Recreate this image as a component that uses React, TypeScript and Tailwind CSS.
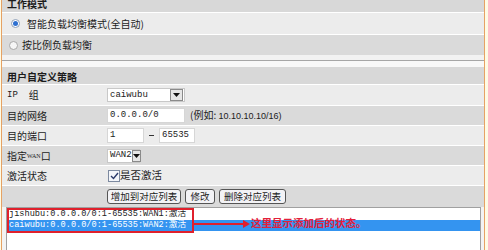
import type { ReactNode } from "react";

const sans = "font-['Noto_Sans_CJK_SC',sans-serif]";
const mono = "font-['Liberation_Mono','Noto_Sans_CJK_SC',monospace]";

function Row({ label, light, h = "h-[19px]", children }: { label?: ReactNode; light?: boolean; h?: string; children?: ReactNode }) {
  return (
    <div className={`flex items-center ${h} ${light ? "bg-[#ececec]" : "bg-[#dadada]"}`}>
      <div className="w-[105px] shrink-0 pl-[5px]">{label}</div>
      <div className="flex items-center">{children}</div>
    </div>
  );
}

function Arrow() {
  return (
    <span className="flex h-[12px] w-[13px] items-center justify-center border border-[#8a8a8a] bg-[#e6e6e6]">
      <svg width="7" height="4" viewBox="0 0 7 4">
        <path d="M0 0h7L3.5 4z" fill="#111" />
      </svg>
    </span>
  );
}

function Select({ value, w }: { value: string; w: string }) {
  return (
    <div className={`flex h-[14px] items-center border border-[#c8c8c8] bg-white pr-px ${w}`}>
      <span className={`${mono} flex-1 pl-[2px] text-[9px] text-[#222]`}>{value}</span>
      <Arrow />
    </div>
  );
}

function Input({ value, w }: { value: string; w: string }) {
  return (
    <div className={`flex h-[15px] items-center border border-[#d6d6d6] bg-white pl-[2px] ${w}`}>
      <span className={`${mono} text-[9px] text-[#222]`}>{value}</span>
    </div>
  );
}

function Button({ label, w }: { label: string; w: string }) {
  return (
    <div className={`flex h-[15px] items-center justify-center rounded-[3px] border border-[#555] bg-[#f3f3f6] text-[9.5px] ${w}`}>
      {label}
    </div>
  );
}

export default function App() {
  return (
    <div className={`${sans} h-[250px] w-[488px] overflow-hidden bg-[#fffbe4] text-[10px] leading-none text-[#1c1c1c]`}>
      <div className="ml-px h-full w-[484px] overflow-hidden border-x border-[#e6a264] bg-[#f3f3f3]">
        {/* ===== 工作模式 ===== */}
        <div className="-mt-[5px] flex flex-col gap-px bg-white">
          <div className="flex h-[17px] items-center bg-[#d8d8d8] pl-[5px] font-bold">工作模式</div>
          <div className="flex h-[21px] items-center gap-[7px] bg-[#ececec] pl-[9px]">
            <span className="flex h-[9px] w-[9px] items-center justify-center rounded-full border border-[#8fa0b8] bg-white">
              <span className="h-[5px] w-[5px] rounded-full bg-[#2d6fd0]" />
            </span>
            <span>智能负载均衡模式(全自动)</span>
          </div>
          <div className="flex h-[20px] items-center gap-[4px] bg-[#dadada] pl-[7px]">
            <span className="h-[9px] w-[9px] rounded-full border border-[#a8a8a8] bg-[#f6f6f6]" />
            <span>按比例负载均衡</span>
          </div>
        </div>

        <div className="h-[5px] bg-[#f2f2f2]" />
        <div className="h-px bg-[#a6a6a6]" />
        <div className="h-[6px] bg-[#f8f8f8]" />

        {/* ===== 用户自定义策略 ===== */}
        <div className="flex flex-col gap-px bg-white">
          <div className="flex h-[17px] items-center bg-[#d8d8d8] pl-[5px] pt-[3px] font-bold">用户自定义策略</div>
          <Row
            light
            h="h-[20px]"
            label={
              <span className="flex items-center">
                <span className={`${mono} text-[9px]`}>IP</span>
                <span className="ml-[11px]">组</span>
              </span>
            }
          >
            <Select value="caiwubu" w="w-[78px]" />
          </Row>
          <Row label="目的网络">
            <Input value="0.0.0.0/0" w="w-[78px]" />
            <span className="ml-[5px]">
              (例如: <span className="font-['Liberation_Sans',sans-serif] text-[9px]">10.10.10.10/16)</span>
            </span>
          </Row>
          <Row light label="目的端口">
            <Input value="1" w="w-[37px]" />
            <span className="mx-[5px] h-px w-[5px] bg-[#333]" />
            <Input value="65535" w="w-[36px]" />
          </Row>
          <Row
            label={
              <span className="flex items-center">
                指定<span className="font-['Liberation_Serif',serif] text-[6px]">WAN</span>口
              </span>
            }
          >
            <Select value="WAN2" w="w-[33px]" />
          </Row>
          <Row light label="激活状态">
            <span className="ml-px flex h-[12px] w-[12px] items-center justify-center border border-[#7d8aa0] bg-[#f4f6fa]">
              <svg width="9" height="8" viewBox="0 0 9 8">
                <path d="M1 4l2.5 2.5L8 1" fill="none" stroke="#2a3a6a" strokeWidth="1.4" />
              </svg>
            </span>
            <span className="text-[10.5px]">是否激活</span>
          </Row>
          <Row h="h-[21px]">
            <div className="flex gap-[4px]">
              <Button label="增加到对应列表" w="w-[74px]" />
              <Button label="修改" w="w-[30px]" />
              <Button label="删除对应列表" w="w-[67px]" />
            </div>
          </Row>
        </div>

        {/* ===== 列表 ===== */}
        <div className="relative">
          <div className={`${mono} ml-[4px] h-[50px] w-[475px] border border-[#a0a0a0] bg-white pt-px text-[8.6px]`}>
            <div className="flex h-[11px] items-center pl-[2px] text-[#222]">jishubu:0.0.0.0/0:1-65535:WAN1:激活</div>
            <div className="flex h-[11px] items-center bg-[#3494f0] pl-[2px] text-white">caiwubu:0.0.0.0/0:1-65535:WAN2:激活</div>
          </div>
          <div className="absolute left-[5px] top-px h-[25px] w-[187px] border-2 border-[#e0202c]" />
          <svg className="absolute left-[191px] top-[12px]" width="60" height="10" viewBox="0 0 60 10">
            <path d="M0 5h52" stroke="#e0202c" strokeWidth="2" />
            <path d="M50 1l7 4-7 4z" fill="#e0202c" />
          </svg>
          <div className="absolute left-[249px] top-[11px] text-[10.5px] font-bold text-[#e3203a]">这里显示添加后的状态。</div>
        </div>
      </div>
    </div>
  );
}
